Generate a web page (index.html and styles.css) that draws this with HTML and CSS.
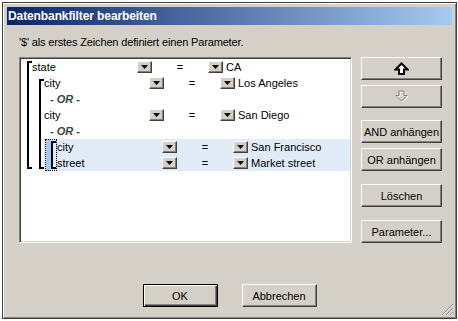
FILE: index.html
```html
<!DOCTYPE html>
<html lang="de">
<head>
    <meta charset="UTF-8">
    <title>Datenbankfilter bearbeiten</title>
    <link rel="stylesheet" href="styles.css">
</head>
<body>
    <div class="window">
        <div class="titlebar">Datenbankfilter bearbeiten</div>
        <div class="content">
            <p class="hint">'$' als erstes Zeichen definiert einen Parameter.</p>
            <div class="main">
                <div class="listbox">
                    <div class="group g0">
                        <div class="bracket"></div>
                        <div class="items">
                            <div class="row">
                                <span class="field">state</span><span class="dd"></span><span class="op">=</span><span class="dd"></span><span class="value">CA</span>
                            </div>
                            <div class="group g1">
                                <div class="bracket"></div>
                                <div class="items">
                                    <div class="row">
                                        <span class="field">city</span><span class="dd"></span><span class="op">=</span><span class="dd"></span><span class="value">Los Angeles</span>
                                    </div>
                                    <div class="or">- OR -</div>
                                    <div class="row">
                                        <span class="field">city</span><span class="dd"></span><span class="op">=</span><span class="dd"></span><span class="value">San Diego</span>
                                    </div>
                                    <div class="or">- OR -</div>
                                    <div class="group g2">
                                        <div class="sel-bracket"><div class="bracket"></div></div>
                                        <div class="items">
                                            <div class="row">
                                                <span class="field">city</span><span class="dd"></span><span class="op">=</span><span class="dd"></span><span class="value">San Francisco</span>
                                            </div>
                                            <div class="row">
                                                <span class="field">street</span><span class="dd"></span><span class="op">=</span><span class="dd"></span><span class="value">Market street</span>
                                            </div>
                                        </div>
                                    </div>
                                </div>
                            </div>
                        </div>
                    </div>
                </div>
                <div class="side">
                    <button class="btn">
                        <svg width="15" height="13" viewBox="0 0 15 13">
                            <polygon points="7.5,1.5 13.5,7.5 10,7.5 10,12 5,12 5,7.5 1.5,7.5" fill="#fff" stroke="#000" stroke-width="2" stroke-linejoin="miter"/>
                        </svg>
                    </button>
                    <button class="btn gap-s" disabled>
                        <svg width="15" height="13" viewBox="0 0 15 13">
                            <polygon points="8.5,12 14,6.5 11,6.5 11,2 6,2 6,6.5 3,6.5" fill="none" stroke="#fff" stroke-width="1"/>
                            <polygon points="7.5,11 13,5.5 10,5.5 10,1 5,1 5,5.5 2,5.5" fill="none" stroke="#808080" stroke-width="1"/>
                        </svg>
                    </button>
                    <button class="btn gap-m">AND anhängen</button>
                    <button class="btn gap-s">OR anhängen</button>
                    <button class="btn gap-l">Löschen</button>
                    <button class="btn gap-l">Parameter...</button>
                </div>
            </div>
        </div>
        <div class="footer">
            <button class="btn wide default">OK</button>
            <button class="btn wide">Abbrechen</button>
        </div>
        <svg class="grip" width="13" height="13" viewBox="0 0 13 13">
            <path d="M12 1 L1 12 M12 5 L5 12 M12 9 L9 12" stroke="#808080" stroke-width="1"/>
            <path d="M12 2 L2 12 M12 6 L6 12 M12 10 L10 12" stroke="#fff" stroke-width="1"/>
        </svg>
    </div>
</body>
</html>
```

FILE: styles.css
```css
body {
    margin: 0;
    padding: 2px;
    background: #fff;
    font-family: "Liberation Sans", Arial, sans-serif;
    font-size: 11px;
    color: #000;
}

.window {
    position: relative;
    box-sizing: border-box;
    width: 455px;
    height: 317px;
    padding: 4px;
    background: #d4d0c8;
    border: 1px solid #404040;
    box-shadow: inset 1px 1px #fff, inset -1px -1px #808080;
}

.titlebar {
    height: 18px;
    line-height: 18px;
    padding-left: 1px;
    background: linear-gradient(to right, #0a246a, #a6caf0);
    color: #fff;
    font-size: 12px;
    font-weight: bold;
    letter-spacing: -0.1px;
}

.content {
    padding-left: 12px;
}

.hint {
    margin: 11px 0 0;
    line-height: 13px;
    letter-spacing: -0.15px;
}

.main {
    display: flex;
    margin-top: 8px;
}

.listbox {
    box-sizing: border-box;
    width: 333px;
    height: 186px;
    padding: 1px;
    background: #fff;
    border: 1px solid;
    border-color: #808080 #fff #fff #808080;
    box-shadow: inset 1px 1px #404040, inset -1px -1px #d4d0c8;
}

.group {
    display: flex;
}

.items {
    flex: 1;
}

.bracket {
    box-sizing: border-box;
    width: 5px;
    border: 2px solid #000;
    border-right: none;
}

.g0 > .bracket {
    margin: 2px 0 2px 6px;
}

.g1 > .bracket {
    margin: 4px 0 2px 7px;
}

.g2 {
    background: #e1ebf8;
}

.sel-bracket {
    display: flex;
    box-sizing: border-box;
    width: 12px;
    margin-left: 1px;
    padding: 1px 0 1px 5px;
    border: 1px dotted #000;
    background: linear-gradient(to right, #a6caf0 5px, transparent 5px);
}

.sel-bracket .bracket {
    width: 5px;
}

.row {
    display: flex;
    align-items: center;
    height: 16px;
}

.field {
    width: 105px;
}

.dd {
    box-sizing: border-box;
    display: flex;
    align-items: center;
    justify-content: center;
    width: 15px;
    height: 12px;
    background: #d4d0c8;
    border: 1px solid;
    border-color: #fff #404040 #404040 #fff;
    box-shadow: inset -1px -1px #808080;
}

.dd::after {
    content: "";
    width: 7px;
    height: 4px;
    background: #000;
    clip-path: polygon(0 0, 100% 0, 50% 100%);
}

.op {
    width: 56px;
    text-align: center;
}

.value {
    margin-left: 3px;
}

.or {
    height: 16px;
    line-height: 16px;
    padding-left: 6px;
    font-weight: bold;
    font-style: italic;
    color: #404040;
}

.side {
    display: flex;
    flex-direction: column;
    margin-left: 9px;
}

.btn {
    box-sizing: border-box;
    display: flex;
    align-items: center;
    justify-content: center;
    width: 81px;
    height: 23px;
    padding: 0;
    background: #d4d0c8;
    border: 1px solid;
    border-color: #fff #404040 #404040 #fff;
    box-shadow: inset -1px -1px #808080;
    font-family: inherit;
    font-size: 11px;
    color: #000;
}

.gap-s {
    margin-top: 5px;
}

.gap-m {
    margin-top: 12px;
}

.gap-l {
    margin-top: 13px;
}

.footer {
    display: flex;
    justify-content: center;
    gap: 24px;
    margin-top: 41px;
}

.btn.wide {
    width: 75px;
}

.btn.default {
    border: 1px solid #000;
    box-shadow: inset 1px 1px #fff, inset -1px -1px #404040, inset -2px -2px #808080;
}

.grip {
    position: absolute;
    right: 2px;
    bottom: 2px;
}
```
